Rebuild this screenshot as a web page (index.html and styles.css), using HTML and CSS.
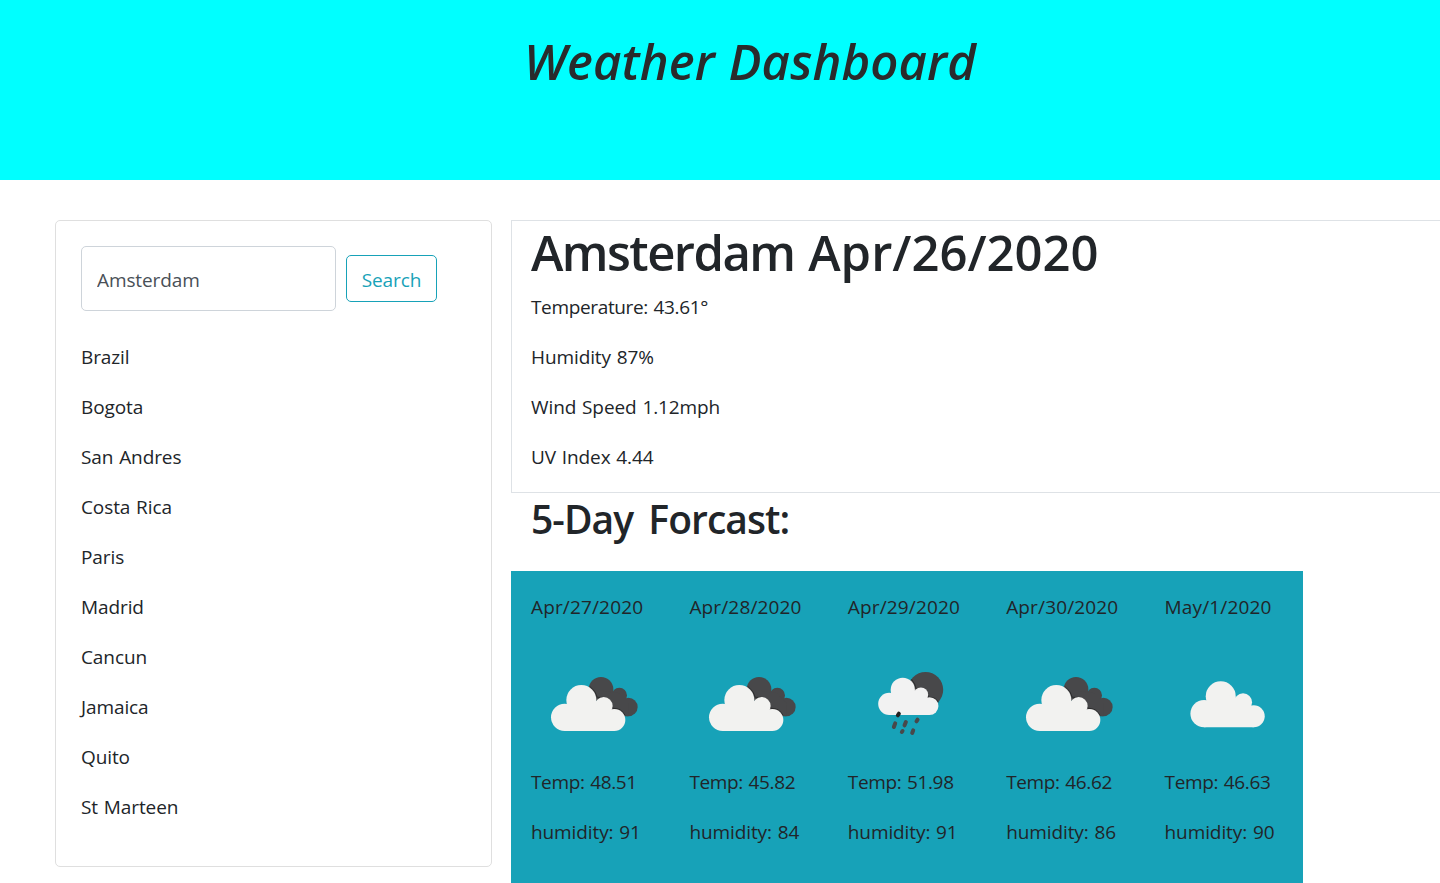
FILE: index.html
```html
<!DOCTYPE html>
<html lang="en">
<head>
<meta charset="utf-8">
<title>Weather Dashboard</title>
<link rel="stylesheet" href="styles.css">
</head>
<body>
<svg class="defs" width="0" height="0" aria-hidden="true">
  <defs>
    <g id="cloud">
      <circle cx="104" cy="172" r="41"/><circle cx="154" cy="120" r="45"/><circle cx="221" cy="138" r="27"/><circle cx="253" cy="180" r="33"/><path d="M104 213V150L154 110L221 130L253 160V213Z"/>
    </g>
    <g id="broken" transform="translate(-1 18) scale(.33333)">
      <g fill="#48484a"><circle cx="213" cy="88" r="37"/><circle cx="268" cy="106" r="23"/><circle cx="295" cy="141" r="28"/><path d="M200 90L268 100L295 130V169H240Z"/></g>
      <path d="M180 80Q198 93 202 112Q238 107 249 145Q274 144 285 166" fill="none" stroke="#2b2b2c" stroke-width="3"/>
      <use href="#cloud" fill="#f2f2f0"/>
    </g>
  </defs>
</svg>
<header class="banner"><h1 class="title">Weather Dashboard</h1></header>
<main class="layout">
  <aside class="search-card">
    <form class="search-form"><input class="search-input" type="text" placeholder="Amsterdam" aria-label="City"><button class="search-button" type="button">Search</button></form>
    <p>Brazil</p><p>Bogota</p><p>San Andres</p><p>Costa Rica</p><p>Paris</p><p>Madrid</p><p>Cancun</p><p>Jamaica</p><p>Quito</p><p>St Marteen</p>
  </aside>
  <section class="results">
    <div class="current">
      <h1 class="city"><span class="city-name">Amsterdam</span> Apr/26/2020</h1>
      <p class="temperature">Temperature: 43.61°</p><p>Humidity 87%</p><p>Wind Speed 1.12mph</p><p>UV Index 4.44</p>
    </div>
    <h2 class="forecast-title">5-Day Forcast:</h2>
    <div class="forecast">
      <div class="day"><p class="date">Apr/27/2020</p><svg class="icon" viewBox="0 0 125 125"><use href="#broken"/></svg><p class="temp">Temp: 48.51</p><p>humidity: 91</p></div>
      <div class="day"><p class="date">Apr/28/2020</p><svg class="icon" viewBox="0 0 125 125"><use href="#broken"/></svg><p class="temp">Temp: 45.82</p><p>humidity: 84</p></div>
      <div class="day"><p class="date">Apr/29/2020</p><svg class="icon" viewBox="0 0 125 125"><g transform="translate(12.2 18) scale(.33333)"><circle cx="196" cy="89" r="53" fill="#48484a"/><path d="M154 58Q166 72 168 87Q198 82 205 112Q225 110 235 127" fill="none" stroke="#2b2b2c" stroke-width="3"/><use href="#cloud" fill="#f2f2f2" transform="translate(3 -7.5) scale(.81)"/><g stroke="#48484a" stroke-width="12" stroke-linecap="round"><path d="M116 161L113 166" stroke="#222"/><path d="M105 190L101 201M137 186L133 196M172 179L169 184M127 213L125 216M159 211L156 219"/></g></g></svg><p class="temp">Temp: 51.98</p><p>humidity: 91</p></div>
      <div class="day"><p class="date">Apr/30/2020</p><svg class="icon" viewBox="0 0 125 125"><use href="#broken"/></svg><p class="temp">Temp: 46.62</p><p>humidity: 86</p></div>
      <div class="day"><p class="date">May/1/2020</p><svg class="icon" viewBox="0 0 125 125"><g transform="translate(5.4 18) scale(.33333)"><use href="#cloud" fill="#f2f2f0" transform="translate(-3 -11)"/></g></svg><p class="temp">Temp: 46.63</p><p>humidity: 90</p></div>
    </div>
  </section>
</main>
</body>
</html>
```
FILE: styles.css
```css
* { box-sizing: border-box; }
body { margin: 0; height: 883px; overflow: hidden; background: #fff; color: #212529; font: 370 19px/30px "Open Sans", "Noto Sans", sans-serif; letter-spacing: -.1px; word-spacing: 1px; }
p { margin: 0 0 20px; white-space: nowrap; }
h1, h2 { margin: 0; font-weight: 600; white-space: nowrap; }
.defs { display: block; height: 0; }
.banner { height: 180px; background: #0ff; padding: 31px 0 0 60px; text-align: center; }
.title { font-size: 49px; line-height: 60px; font-style: italic; color: #292b2c; letter-spacing: .1px; }
.layout { display: flex; align-items: flex-start; gap: 19px; padding: 40px 0 0 55px; }
.search-card { width: 437px; height: 647px; flex: none; border: 1px solid #dfdfdf; border-radius: 5px; padding: 25px; }
.search-form { display: flex; align-items: center; gap: 10px; margin: 0 0 31px; }
.search-input { width: 255px; height: 65px; border: 1px solid #ced4da; border-radius: 5px; padding: 3px 15px 0; font: inherit; letter-spacing: inherit; }
.search-input::placeholder { color: #495057; opacity: 1; }
.search-button { width: 91px; height: 47px; margin-top: -1px; border: 1px solid #17a2b8; border-radius: 5px; background: #fff; color: #17a2b8; padding: 3px 0 0; font: inherit; letter-spacing: inherit; }
.results { flex: 1; min-width: 0; }
.current { height: 273px; border: 1px solid #dee2e6; border-right: 0; padding: 1px 0 0 19px; }
.city { font-size: 49px; line-height: 60px; margin-bottom: 10px; letter-spacing: 0; }
.city-name { letter-spacing: -1.55px; }
.temperature { letter-spacing: -.35px; }
.forecast-title { height: 78px; padding: 2px 0 0 20px; font-size: 39px; line-height: 48px; letter-spacing: -.95px; word-spacing: 6px; }
.forecast { display: grid; grid-template-columns: repeat(5, 158.4px); width: 792px; height: 330px; background: #17a2b8; padding-top: 21px; }
.day { padding-left: 20px; }
.date { letter-spacing: .15px; }
.temp { letter-spacing: -.35px; }
.icon { display: block; width: 125px; height: 125px; }
```
